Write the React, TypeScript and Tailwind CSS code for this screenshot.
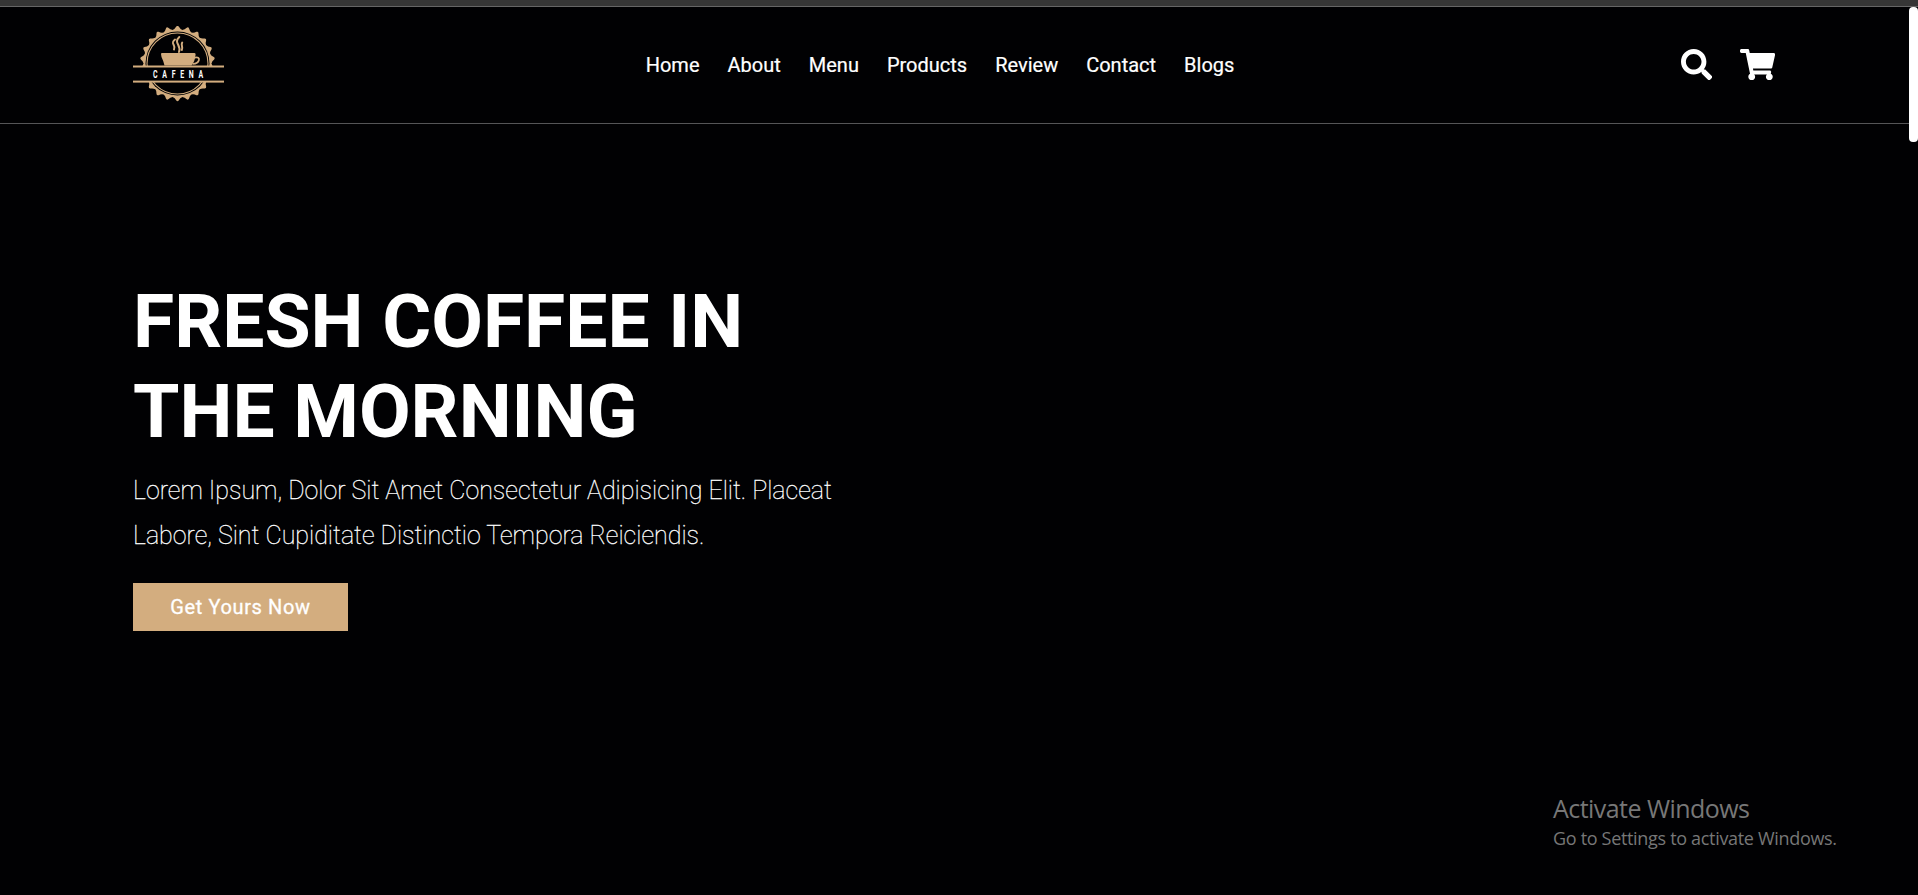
import { FaSearch, FaShoppingCart } from "react-icons/fa";

const links = ["Home", "About", "Menu", "Products", "Review", "Contact", "Blogs"];

const teeth = Array.from({ length: 22 }, (_, i) => i * (360 / 22));

function Badge() {
  return (
    <svg viewBox="0 0 92 76" className="h-[76px] w-[92px]" aria-label="Cafena">
      <g fill="#d3ad7f">
        {teeth.map((a) => (
          <path key={a} d="M39.300 6 L39.600 3.900 Q42 3 43.300 0.600 Q44.500 -0.900 45.700 0.600 Q47 3 49.400 3.900 L49.700 6 Z" transform={`rotate(${a} 44.5 37.5)`} />
        ))}
        <circle cx="44.5" cy="37.5" r="33.4" />
      </g>
      <circle cx="44.5" cy="37.5" r="32" fill="#010103" />
      <circle cx="44.5" cy="37.5" r="30.5" fill="none" stroke="#d3ad7f" strokeWidth="1.100" />
      <rect x="0" y="40" width="92" height="15.5" fill="#010103" />
      <rect x="0" y="39.5" width="91" height="2" fill="#d3ad7f" />
      <rect x="0" y="54.6" width="91" height="2" fill="#d3ad7f" />
      <path d="M28 28 Q28 27 29 27 H61.500 Q62.800 27 62.600 28.500 Q62 35.500 58.500 39.500 H31.500 Q30.500 35 28.500 31 Z" fill="#d3ad7f" />
      <path d="M61.500 31.800 C68.500 29.500 67 38 59.500 37.800" fill="none" stroke="#d3ad7f" strokeWidth="1.700" />
      <path
        d="M42 13.500 C36.500 17.500 43.500 19 41 23.500 M46.300 11 C40 17 48.800 19 46 26 M49.200 16.500 C47.500 19.500 50.500 21 48.800 24"
        fill="none"
        stroke="#d3ad7f"
        strokeWidth="2"
        strokeLinecap="round"
      />
      <text
        x="0"
        y="0"
        transform="translate(20 52) scale(0.62 1)"
        fill="#fff"
        fontSize="11.2"
        fontWeight="700"
        textLength="81"
        lengthAdjust="spacing"
        className="font-['Roboto']"
      >
        CAFENA
      </text>
    </svg>
  );
}

export default function App() {
  return (
    <div className="relative flex h-[895px] w-full flex-col overflow-hidden bg-[#010103] font-['Roboto',sans-serif] text-white">
      <div className="h-[7px] shrink-0 border-b border-[#666] bg-[#363636]" />
      <header className="flex h-[117px] shrink-0 items-center border-b border-[#555557] pr-[142.6px] pl-[133px]">
        <div className="-mt-[2px] w-[92px]">
          <Badge />
        </div>
        <nav className="ml-[420.7px] flex gap-7 text-[20px] leading-[24px] [-webkit-text-stroke:0.2px_white]">
          {links.map((l) => (
            <a key={l} href="#">{l}</a>
          ))}
        </nav>
        <div className="-mt-px ml-auto flex items-center gap-7">
          <FaSearch className="h-[31.25px] w-[31.25px]" />
          <FaShoppingCart className="h-[31.25px] w-[35.2px]" />
        </div>
      </header>
      <main className="flex flex-col items-start pt-[152px] pl-[133px]">
        <h1 className="text-[75px] leading-[90px] font-bold">
          FRESH COFFEE IN<br />THE MORNING
        </h1>
        <p className="pt-[12px] text-[25px] leading-[45px] font-thin text-white [-webkit-text-stroke:0.3px_white]">
          Lorem Ipsum, Dolor Sit Amet Consectetur Adipisicing Elit. Placeat<br />
          Labore, Sint Cupiditate Distinctio Tempora Reiciendis.
        </p>
        <button className="mt-[25px] h-12 w-[215px] bg-[#d3ad7f] text-[20px] tracking-[0.62px] [-webkit-text-stroke:0.3px_white]">Get Yours Now</button>
      </main>
      <aside className="absolute top-[793px] left-[1553px] font-['Open_Sans',sans-serif] text-[#777]">
        <div className="text-[25px] leading-[31px] tracking-[-0.55px]">Activate Windows</div>
        <div className="pt-px text-[18px] leading-[26px] tracking-[-0.32px]">Go to Settings to activate Windows.</div>
      </aside>
      <div className="absolute top-[7px] right-0 h-[135px] w-[9px] rounded-[4px] bg-white" />
    </div>
  );
}
